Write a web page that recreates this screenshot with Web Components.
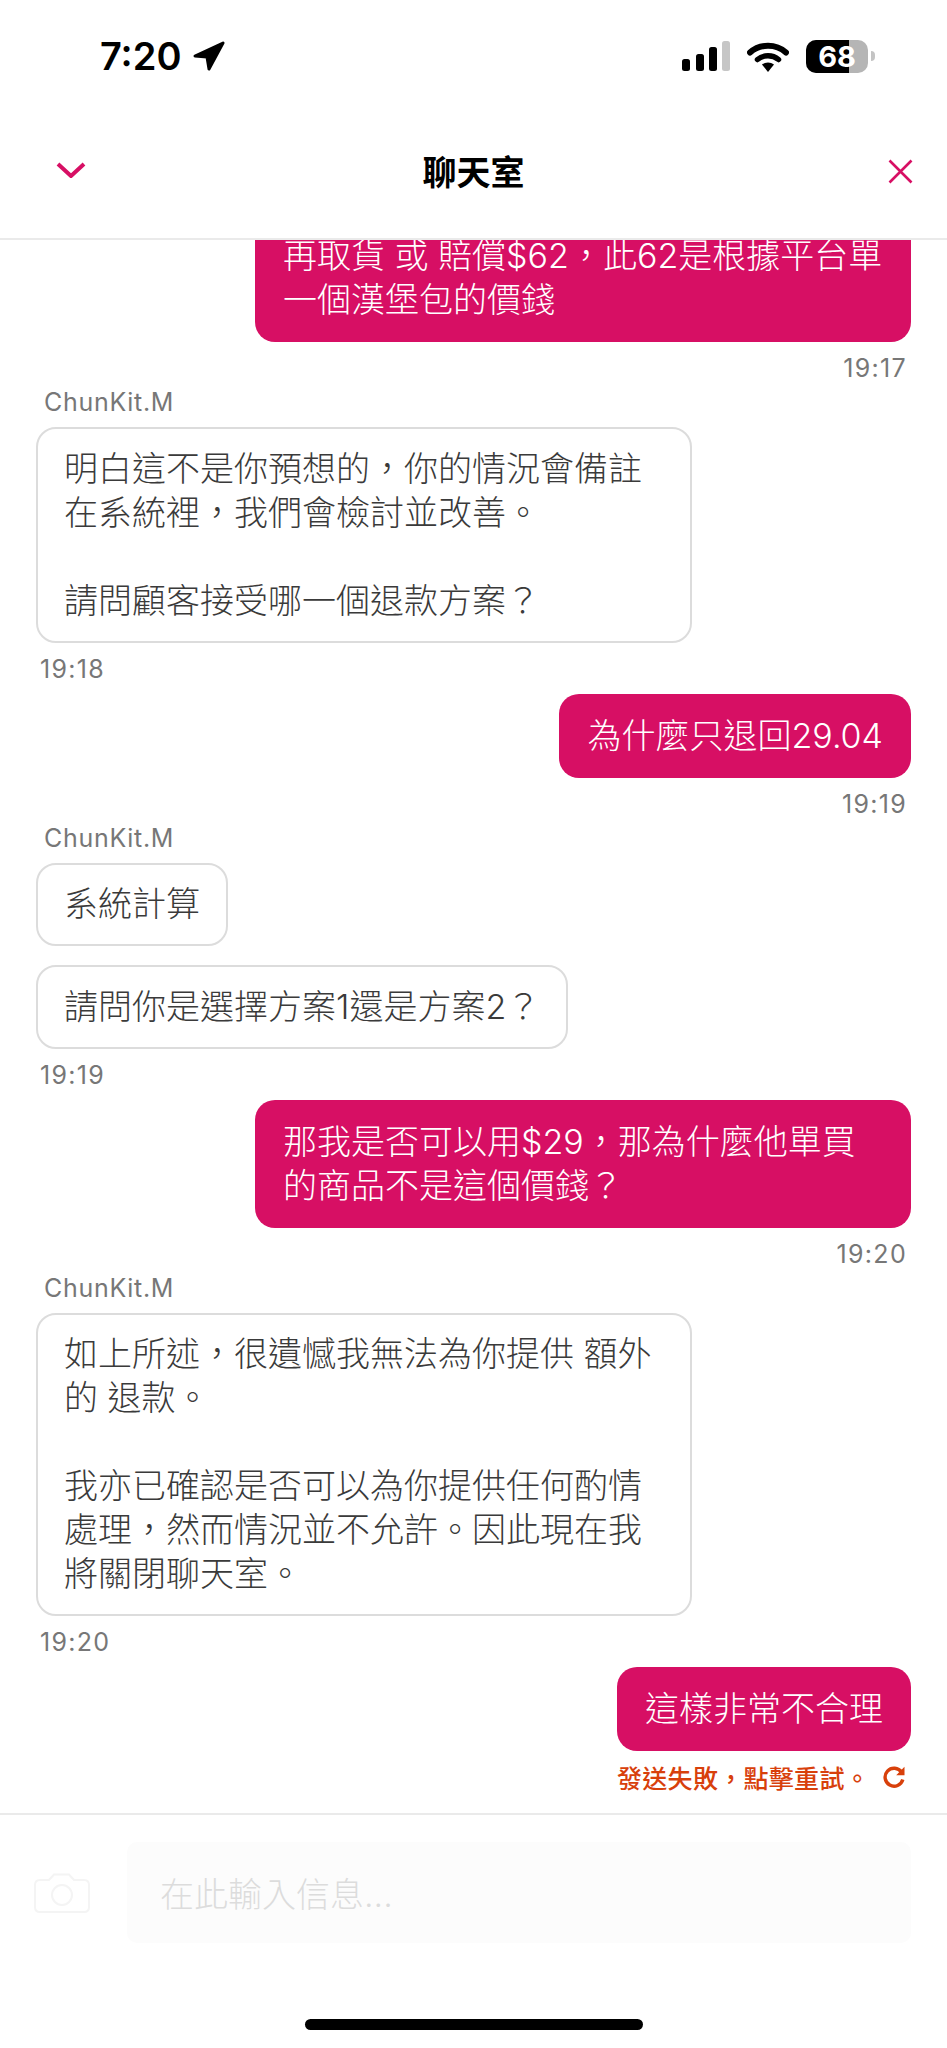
<!DOCTYPE html>
<html lang="zh-Hant">
<head>
<meta charset="utf-8">
<title>聊天室</title>
<style>
  html, body { margin: 0; padding: 0; background: #fff; }
  body { font-family: Inter, "Noto Sans CJK TC", sans-serif; }
</style>
</head>
<body>
<chat-app>
  <status-bar slot="status"></status-bar>
  <chat-header slot="header">聊天室</chat-header>

  <chat-bubble sent>再取貨 或 賠償$62，此62是根據平台單一個漢堡包的價錢</chat-bubble>
  <chat-time right>19:17</chat-time>

  <chat-name>ChunKit.M</chat-name>
  <chat-bubble>明白這不是你預想的，你的情況會備註在系統裡，我們會檢討並改善。<br><br>請問顧客接受哪一個退款方案？</chat-bubble>
  <chat-time>19:18</chat-time>

  <chat-bubble sent>為什麼只退回29.04</chat-bubble>
  <chat-time right>19:19</chat-time>

  <chat-name>ChunKit.M</chat-name>
  <chat-bubble>系統計算</chat-bubble>
  <chat-bubble next>請問你是選擇方案1還是方案2？</chat-bubble>
  <chat-time>19:19</chat-time>

  <chat-bubble sent>那我是否可以用$29，那為什麼他單買的商品不是這個價錢？</chat-bubble>
  <chat-time right>19:20</chat-time>

  <chat-name>ChunKit.M</chat-name>
  <chat-bubble>如上所述，很遺憾我無法為你提供 額外的 退款。<br><br>我亦已確認是否可以為你提供任何酌情處理，然而情況並不允許。因此現在我將關閉聊天室。</chat-bubble>
  <chat-time>19:20</chat-time>

  <chat-bubble sent>這樣非常不合理</chat-bubble>
  <send-failed>發送失敗，點擊重試。</send-failed>

  <chat-composer slot="composer" placeholder="在此輸入信息..."></chat-composer>
</chat-app>

<script>
class ChatApp extends HTMLElement {
  connectedCallback() {
    this.attachShadow({ mode: 'open' });
    this.shadowRoot.innerHTML = `
      <style>
        :host { display: flex; flex-direction: column; height: 2048px; overflow: hidden; background: #fff; }
        .messages {
          flex: 1; min-height: 0; overflow: hidden;
          display: flex; flex-direction: column; justify-content: flex-end;
          padding: 0 36px 19px;
        }
      </style>
      <slot name="status"></slot>
      <slot name="header"></slot>
      <div class="messages"><slot></slot></div>
      <slot name="composer"></slot>
    `;
  }
}

class StatusBar extends HTMLElement {
  connectedCallback() {
    this.attachShadow({ mode: 'open' });
    this.shadowRoot.innerHTML = `
      <style>
        :host { display: flex; align-items: center; height: 112px; padding: 0 72px 0 100px; box-sizing: border-box; font-family: Inter, "Liberation Sans", sans-serif; }
        .time { font-size: 38px; font-weight: 600; color: #000; line-height: 40px; }
        .arrow { margin-left: 12px; display: block; }
        .right { margin-left: auto; display: flex; align-items: center; }
        svg { display: block; }
        .wifi { margin-left: 17px; }
        .battery { margin-left: 17px; position: relative; width: 62px; height: 33px; border-radius: 10px; overflow: hidden; background: #b5b5b5; }
        .level { width: 43px; height: 100%; background: #000; }
        .pct { position: absolute; inset: 0; text-align: center; color: #fff; font-size: 29px; font-weight: 700; line-height: 33px; }
        .nub { margin-left: 3px; width: 4px; height: 10px; border-radius: 0 4px 4px 0; background: #c4c4c4; }
      </style>
      <span class="time">7:20</span>
      <svg class="arrow" width="32" height="30" viewBox="0 0 32 30">
        <path d="M2 15 L30 2 L16 28 L14 16 Z" fill="#000" stroke="#000" stroke-width="3" stroke-linejoin="round"/>
      </svg>
      <div class="right">
        <svg width="48" height="30" viewBox="0 0 48 30">
          <rect x="0" y="18" width="8" height="12" rx="2.5" fill="#000"/>
          <rect x="14" y="13" width="8" height="17" rx="2.5" fill="#000"/>
          <rect x="27" y="6" width="8" height="24" rx="2.5" fill="#000"/>
          <rect x="40" y="0" width="8" height="30" rx="2.5" fill="#c6c6c6"/>
        </svg>
        <svg class="wifi" width="42" height="31" viewBox="0 0 42 31">
          <path d="M3 11.5 C13 2.5 29 2.5 39 11.5" fill="none" stroke="#000" stroke-width="6" stroke-linecap="round"/>
          <path d="M10.5 18.5 C16.5 13.5 25.5 13.5 31.5 18.5" fill="none" stroke="#000" stroke-width="5.5" stroke-linecap="round"/>
          <path d="M15 23.5 C18.5 20.8 23.5 20.8 27 23.5 L21 31 Z" fill="#000"/>
        </svg>
        <div class="battery"><div class="level"></div><div class="pct">68</div></div>
        <div class="nub"></div>
      </div>
    `;
  }
}

class ChatHeader extends HTMLElement {
  connectedCallback() {
    this.attachShadow({ mode: 'open' });
    this.shadowRoot.innerHTML = `
      <style>
        :host { display: grid; grid-template-columns: 1fr auto 1fr; align-items: center; height: 128px; padding: 0 34px 8px 34px; box-sizing: border-box; border-bottom: 2px solid #eaeaea; background: #fff; font-family: "Noto Sans CJK TC", sans-serif; }
        .title { font-size: 34px; font-weight: 700; line-height: 44px; color: #000; }
        svg { display: block; }
        .back { margin: -2px 0 0 22px; }
        .close { justify-self: end; }
      </style>
      <svg class="back" width="30" height="16" viewBox="0 0 30 16"><path d="M2 2 L15 14 L28 2" fill="none" stroke="#d70f64" stroke-width="4"/></svg>
      <span class="title"><slot></slot></span>
      <svg class="close" width="25" height="25" viewBox="0 0 25 25"><path d="M1.5 1.5 L23.5 23.5 M23.5 1.5 L1.5 23.5" fill="none" stroke="#d70f64" stroke-width="2.6"/></svg>
    `;
  }
}

class ChatBubble extends HTMLElement {
  connectedCallback() {
    this.attachShadow({ mode: 'open' });
    this.shadowRoot.innerHTML = `
      <style>
        :host {
          display: block; flex: none; align-self: flex-start; box-sizing: border-box; max-width: 656px;
          padding: 17.75px 26px; border: 2px solid #dcdcdc; border-radius: 20px;
          font-size: 34px; line-height: 44px; font-weight: 300; color: #3a3a3a; background: #fff;
        }
        :host([sent]) { align-self: flex-end; margin-top: 8px; padding: 20px 28px; border: 0; background: #d70f64; color: #fff; }
        :host([next]) { margin-top: 19px; }
      </style>
      <slot></slot>
    `;
  }
}

class ChatTime extends HTMLElement {
  connectedCallback() {
    this.attachShadow({ mode: 'open' });
    this.shadowRoot.innerHTML = `
      <style>
        :host { display: block; flex: none; margin-top: 9px; padding-left: 4px; line-height: 34px; font-size: 25px; letter-spacing: 1.3px; font-family: Inter, "Liberation Sans", sans-serif; color: #777; }
        :host([right]) { text-align: right; padding: 0 4px 0 0; }
      </style>
      <slot></slot>
    `;
  }
}

class ChatName extends HTMLElement {
  connectedCallback() {
    this.attachShadow({ mode: 'open' });
    this.shadowRoot.innerHTML = `
      <style>
        :host { display: block; flex: none; margin: 8px 0 16px; padding-left: 8px; line-height: 18px; font-size: 25px; letter-spacing: 0.7px; font-family: Inter, "Liberation Sans", sans-serif; color: #777; }
      </style>
      <slot></slot>
    `;
  }
}

class SendFailed extends HTMLElement {
  connectedCallback() {
    this.attachShadow({ mode: 'open' });
    this.shadowRoot.innerHTML = `
      <style>
        :host { display: flex; flex: none; align-items: center; justify-content: flex-end; margin-top: 9px; height: 34px; padding-right: 6px; font-size: 25px; letter-spacing: 0.3px; line-height: 34px; font-weight: 500; color: #d8400b; font-family: "Noto Sans CJK TC", sans-serif; }
        svg { display: block; margin-left: 13px; }
      </style>
      <span><slot></slot></span>
      <svg width="22" height="22" viewBox="0 0 22 22">
        <path d="M18.6 6.2 A9 9 0 1 0 19.8 13.5" fill="none" stroke="#d8400b" stroke-width="3.4"/>
        <path d="M21.5 0.8 L21.5 9.2 L13.2 9.2 Z" fill="#d8400b"/>
      </svg>
    `;
  }
}

class ChatComposer extends HTMLElement {
  connectedCallback() {
    this.attachShadow({ mode: 'open' });
    const placeholder = this.getAttribute('placeholder');
    this.shadowRoot.innerHTML = `
      <style>
        :host { display: block; flex: none; height: 235px; box-sizing: border-box; border-top: 2px solid #eaeaea; position: relative; background: #fff; }
        .row { display: flex; align-items: center; gap: 37px; padding: 27px 36px 0 34px; }
        svg { display: block; flex: none; }
        .input { flex: 1; height: 101px; display: flex; align-items: center; padding-left: 33px; box-sizing: border-box; border-radius: 10px; background: #fcfcfc; color: #dcdcdc; font-size: 34px; font-weight: 300; }
        .home { position: absolute; left: 305px; bottom: 18px; width: 338px; height: 11px; border-radius: 6px; background: #000; }
      </style>
      <div class="row">
        <svg width="56" height="40" viewBox="0 0 56 40">
          <path d="M6 7 H15 L20 1.5 H35 L40 7 H50 Q55 7 55 12 V34 Q55 39 50 39 H6 Q1 39 1 34 V12 Q1 7 6 7 Z" fill="none" stroke="#f4f4f4" stroke-width="2"/>
          <circle cx="28" cy="22" r="10" fill="none" stroke="#f4f4f4" stroke-width="2"/>
        </svg>
        <div class="input">${placeholder}</div>
      </div>
      <div class="home"></div>
    `;
  }
}

customElements.define('chat-app', ChatApp);
customElements.define('status-bar', StatusBar);
customElements.define('chat-header', ChatHeader);
customElements.define('chat-bubble', ChatBubble);
customElements.define('chat-time', ChatTime);
customElements.define('chat-name', ChatName);
customElements.define('send-failed', SendFailed);
customElements.define('chat-composer', ChatComposer);
</script>
</body>
</html>
